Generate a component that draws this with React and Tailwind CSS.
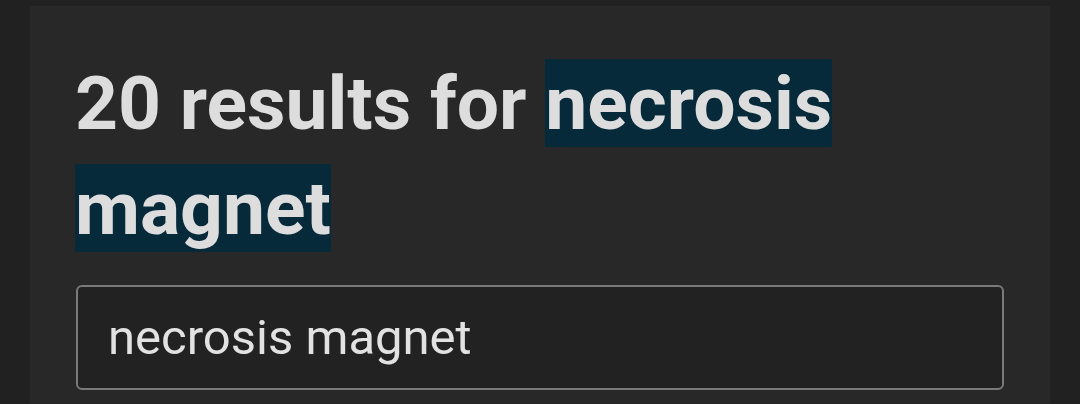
export default function App() {
  return (
    <div className="min-h-screen bg-[#212121] px-[30px] pt-[6px] overflow-hidden" style={{ fontFamily: "Roboto, 'Liberation Sans', sans-serif" }}>
      <div className="bg-[#282828] px-[46px] pt-[45px] pb-[40px] h-[420px]">
        <h1 className="text-[75px] leading-[105px] font-bold text-[#dddddd] -ml-[1px]">
          20 results for <mark className="bg-[#072a3a] text-[#dddddd]">necrosis</mark>{" "}
          <mark className="bg-[#072a3a] text-[#dddddd]">magnet</mark>
        </h1>
        <input
          type="text"
          defaultValue="necrosis magnet"
          className="mt-[24px] block w-full h-[105px] rounded-[6px] border-2 border-[#7a7a7a] bg-[#222222] px-[30px] text-[49px] text-[#e2e2e2] outline-none"
        />
      </div>
    </div>
  );
}
